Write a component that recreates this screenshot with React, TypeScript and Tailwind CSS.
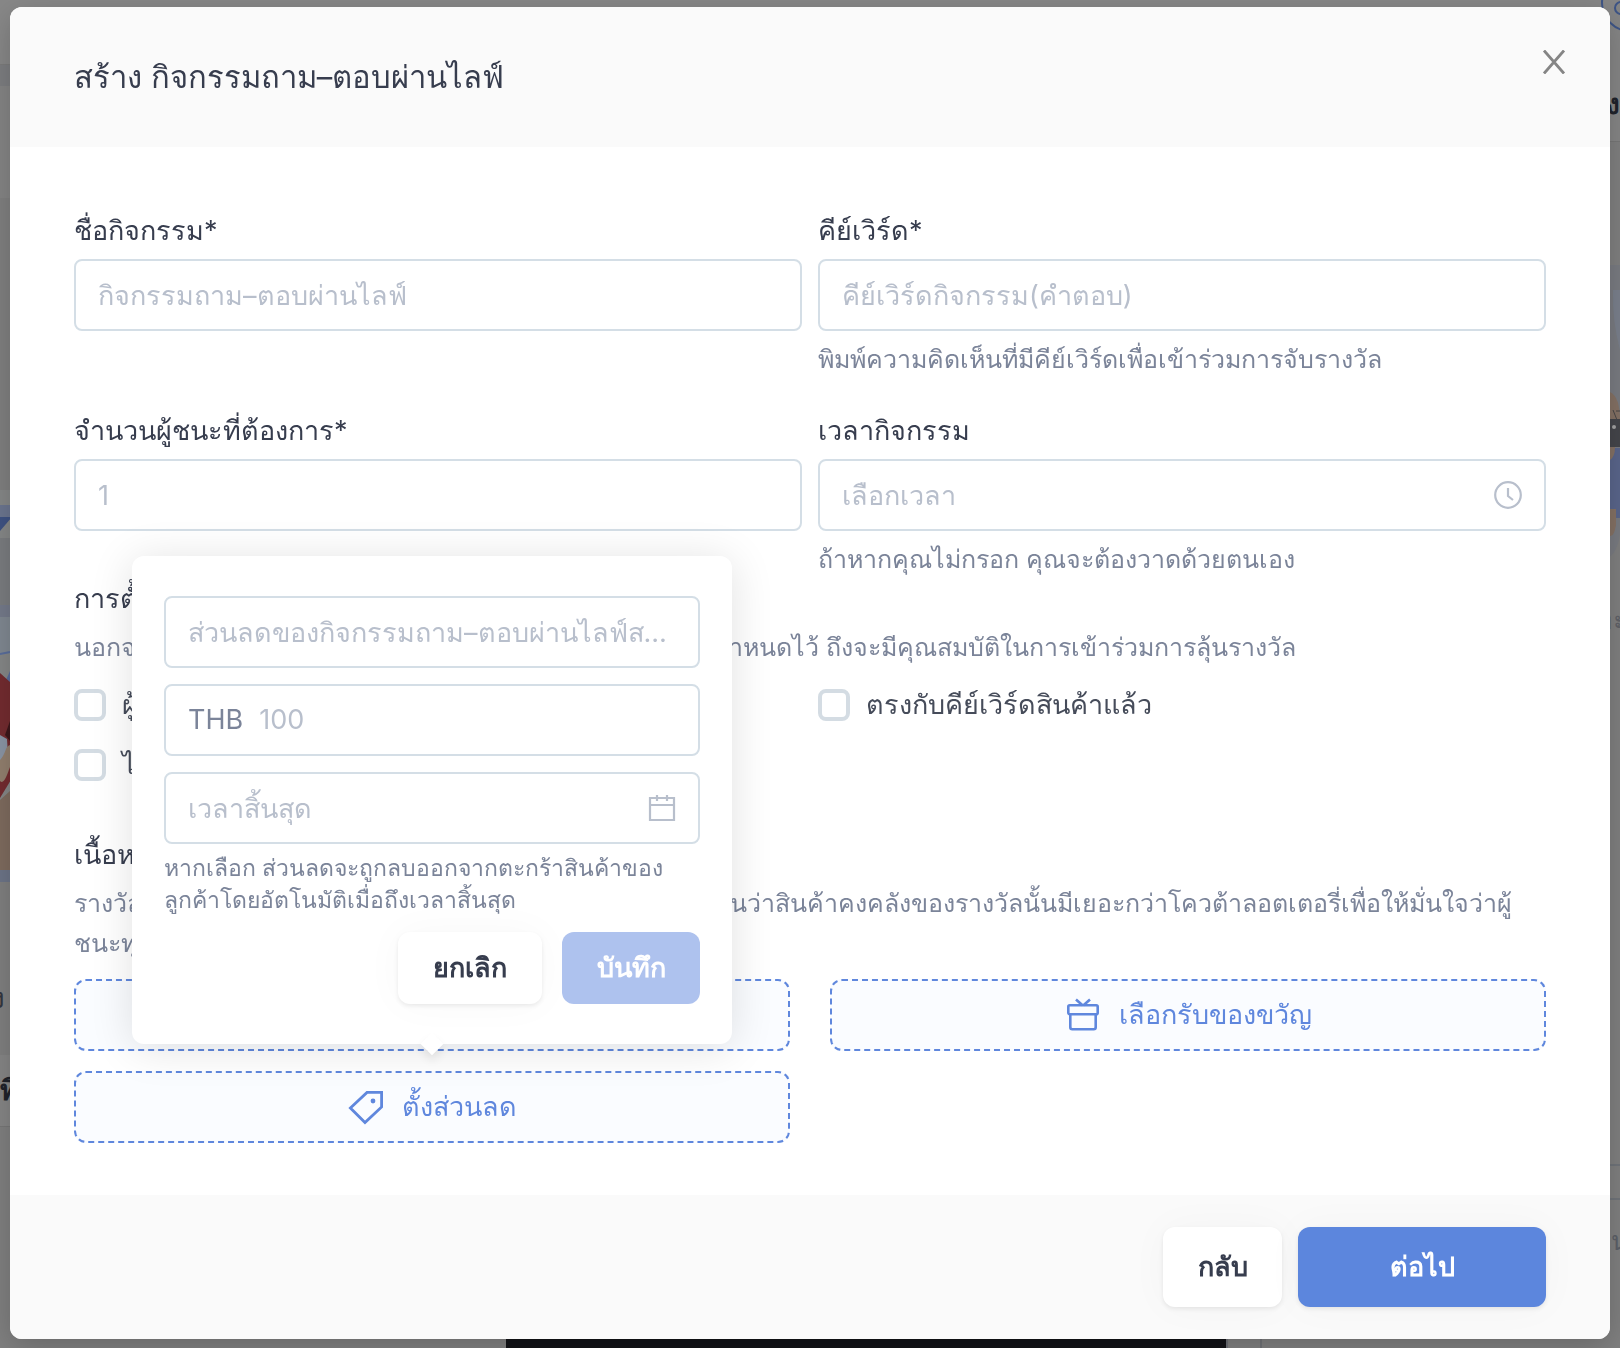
import React, { useState } from 'react';

const inputClass =
    'block w-full h-[72px] rounded-lg border-2 border-[#d4dee6] bg-transparent px-[22px] text-[27px] text-[#373d4e] text-ellipsis outline-none placeholder:text-[#b8bfcc] placeholder:opacity-100';

const ClockIcon = () => (
    <svg className="size-7" viewBox="0 0 28 28" fill="none" stroke="#b8bfcc" strokeWidth="2.2">
        <circle cx="14" cy="14" r="12.8" />
        <path d="M14 7v8l5 4" />
    </svg>
);

const CalendarIcon = () => (
    <svg className="size-7" viewBox="0 0 28 28" fill="none" stroke="#b8bfcc" strokeWidth="2.2">
        <path d="M2 4h24v22H2zM2 11h24M9 1v6M19 1v6" />
    </svg>
);

const GiftIcon = () => (
    <svg className="size-9" viewBox="0 0 36 36" fill="none" stroke="#5f87dd" strokeWidth="2.6">
        <rect x="3.3" y="8.3" width="29.4" height="9" rx="1.5" />
        <path d="M5.3 17.3v13a2 2 0 0 0 2 2h21.4a2 2 0 0 0 2-2v-13" />
        <path d="M11 2.5l6.5 5.8M25 2.5l-6.5 5.8" />
    </svg>
);

const TagIcon = () => (
    <svg className="size-9" viewBox="0 0 36 36" fill="none" stroke="#5f87dd" strokeWidth="2.8">
        <path d="M19 3.4h14.6v14.6L17 33.6 2.4 19z" />
        <circle cx="25" cy="12" r="2.4" fill="#5f87dd" stroke="none" />
    </svg>
);

// Dimmed page that stays visible around the dialog
const Backdrop = () => (
    <div className="fixed inset-0 overflow-hidden bg-[#808080]" aria-hidden="true">
        <div className="absolute inset-x-0 top-0 h-16 bg-[#888888]" />
        <div className="absolute top-16 left-0 h-[22px] w-10 border-t border-[#7c7c7c] bg-[#7d7e81]" />
        <div className="absolute top-[86px] left-0 h-28 w-10 bg-[#858585]" />
        <svg className="absolute top-[490px] left-0 h-[400px] w-5" viewBox="0 0 20 400">
            <path fill="#868888" d="M0 0h20v400H0z" />
            <path fill="#6c7690" d="M0 15h20v12H0z" />
            <path fill="#3f5384" d="M0 27h12L0 41z" />
            <path fill="#7b7d80" d="M0 48h20v67H0z" />
            <path fill="#757b8b" d="M0 115h20v12H0z" />
            <path fill="#818992" d="M0 127h20v37H0z" />
            <path stroke="#5a6e9c" strokeWidth="2" d="M0 164l10-2" />
            <path fill="#5a6d9b" d="M6 190l4-9v18z" />
            <path fill="#742c30" d="M0 183l20 18v74l-20 33z" />
            <path fill="#3d181b" d="M5 245l5-14v20z" />
            <path fill="#8b96a6" d="M0 245l7 4 2 30H0z" />
            <path fill="#93806f" d="M0 270c6-6 5-14 10-15v22c-3 8-6 18-10 14z" />
            <path fill="#7f6c5f" d="M0 310l20-18v88H0z" />
            <path fill="#6d7588" d="M0 380h20v12H0z" />
            <path fill="#808080" d="M0 392h20v8H0z" />
        </svg>
        <span className="absolute top-[982px] left-[-9px] text-[28px] leading-8 text-[#34373f]">ง</span>
        <div className="absolute top-[1055px] left-0 h-[72px] w-10 border-b border-[#777777] bg-[#868686]" />
        <span className="absolute top-[1074px] left-0 text-[28px] leading-8 font-bold text-[#20232b]">ที่</span>

        <div className="absolute top-0 right-0 h-[142px] w-10 border-b border-[#777777] bg-[#868686]" />
        <svg className="absolute top-0 right-0 h-10 w-5" viewBox="0 0 20 40" fill="none" stroke="#3e5587" strokeWidth="2">
            <circle cx="30" cy="3" r="28" />
            <circle cx="21" cy="8" r="6" />
        </svg>
        <span className="absolute top-[88px] right-0 text-[28px] leading-8 font-bold text-[#20232b]">ง</span>
        <svg className="absolute top-[260px] right-0 h-[300px] w-5" viewBox="0 0 20 300">
            <path fill="#7a7c82" d="M0 5h20v270q-4 25-20 25z" />
            <path fill="#7b818d" d="M13 30h7v60q-8-30-7-60z" />
            <path fill="#857265" d="M10 132q10 5 10 28H10z" />
            <path stroke="#4a4747" fill="none" d="M13 150l4 10M16 151h4" />
            <path fill="#45464b" d="M10 159h10v28H10z" />
            <circle cx="14" cy="167" r="2" fill="#a5a5a5" />
            <path fill="#5a668c" d="M10 188h10v70H10z" />
            <path fill="#857265" d="M10 187h5q0 10-5 13zM10 249h6v16q-2 12-6 11z" />
        </svg>
        <span className="absolute top-[603px] right-[-8px] text-[28px] leading-8 text-[#606268]">อะ</span>
        <div className="absolute top-[1164px] right-0 h-9 w-10 border-y-2 border-[#70747a]" />
        <span className="absolute top-[1225px] right-[-9px] text-[26px] leading-8 text-[#5c6068]">น</span>
        <div className="absolute bottom-0 left-[506px] h-4 w-[722px] border-r-2 border-[#6c6f75] bg-[#121317]" />
        <div className="absolute bottom-0 left-[1260px] h-4 w-0.5 bg-[#707276]" />
    </div>
);

type CheckProps = {
    id: string;
    label: string;
};

const Check = ({ id, label }: CheckProps) => (
    <div className="flex h-11 items-center gap-4">
        <input
            id={id}
            type="checkbox"
            className="size-8 shrink-0 appearance-none rounded-lg border-4 border-[#d4dce3] bg-white checked:bg-[#5c86dd]"
        />
        <label htmlFor={id} className="text-[27px] text-[#464c5a]">
            {label}
        </label>
    </div>
);

const DiscountPopover = ({ onClose }: { onClose: () => void }) => (
    <div className="absolute bottom-full left-1/2 z-10 mb-[27px] w-[600px] -translate-x-1/2 rounded-xl bg-white px-8 py-10 shadow-[0_4px_44px_rgba(0,0,0,0.12)]">
        <div className="absolute -bottom-2 left-1/2 size-4 -translate-x-1/2 rotate-45 bg-white shadow-[4px_4px_10px_rgba(0,0,0,0.08)]" />
        <div className="relative space-y-4">
            <input
                type="text"
                aria-label="ชื่อส่วนลด"
                placeholder="ส่วนลดของกิจกรรมถาม–ตอบผ่านไลฟ์สดประจำวัน"
                className={inputClass}
            />
            <div className="flex h-[72px] items-center gap-4 rounded-lg border-2 border-[#d4dee6] px-[22px] text-[27px]">
                <label htmlFor="amount" className="text-[#7b8499]">THB</label>
                <input
                    id="amount"
                    type="text"
                    placeholder="100"
                    className="w-full min-w-0 outline-none placeholder:text-[#b8bfcc] placeholder:opacity-100"
                />
            </div>
            <div className="relative">
                <input type="text" aria-label="เวลาสิ้นสุด" placeholder="เวลาสิ้นสุด" className={inputClass} />
                <span className="absolute top-[22px] right-6">
                    <CalendarIcon />
                </span>
            </div>
        </div>
        <p className="mt-2 text-[23px] leading-8 text-[#7b8499]">
            หากเลือก ส่วนลดจะถูกลบออกจากตะกร้าสินค้าของ
            <br />
            ลูกค้าโดยอัตโนมัติเมื่อถึงเวลาสิ้นสุด
        </p>
        <div className="mt-4 flex justify-end gap-5">
            <button
                onClick={onClose}
                className="h-[72px] w-36 rounded-xl bg-white text-[27px] font-bold text-[#373d4e] shadow-[0_2px_4px_rgba(0,0,0,0.08),0_0_40px_rgba(0,0,0,0.03)]"
            >
                ยกเลิก
            </button>
            <button disabled className="h-[72px] w-[138px] rounded-xl bg-[#aec2ee] text-[27px] font-bold text-white">
                บันทึก
            </button>
        </div>
    </div>
);

const labelClass = 'block text-[27px] leading-10 text-[#373d4e]';
const hintClass = 'mt-2 text-[25px] leading-10 text-[#7b8499]';
const prizeClass =
    'flex h-[72px] w-full items-center justify-center gap-[18px] rounded-xl border-2 border-dashed border-[#5f87dd] bg-[#fafcff] text-[27px] text-[#5f87dd]';

export default function App() {
    const [discountOpen, setDiscountOpen] = useState(true);

    return (
        <div className="font-['Inter',sans-serif]">
            <Backdrop />
            <div className="relative px-2.5 pt-[7px] pb-[9px]">
                <div
                    role="dialog"
                    aria-labelledby="dialog-title"
                    className="rounded-xl bg-white shadow-[0_8px_32px_rgba(0,0,0,0.2)]"
                >
                    <header className="flex items-start justify-between rounded-t-xl bg-[#fafafa] py-10 pr-[41px] pl-16">
                        <h1 id="dialog-title" className="text-[31px] leading-[60px] text-[#373d4e]">
                            สร้าง กิจกรรมถาม–ตอบผ่านไลฟ์
                        </h1>
                        <button aria-label="ปิด" className="flex size-[30px] items-center justify-center">
                            <svg className="size-6" viewBox="0 0 24 24" fill="none" stroke="#858585" strokeWidth="2.8">
                                <path d="M2 0.5l20 23M22 0.5l-20 23" />
                            </svg>
                        </button>
                    </header>

                    <div className="px-16 pt-16 pb-[52px]">
                        {/* Activity fields */}
                        <div className="grid grid-cols-2 gap-x-4 gap-y-8">
                            <div>
                                <label htmlFor="name" className={labelClass}>ชื่อกิจกรรม*</label>
                                <input id="name" type="text" placeholder="กิจกรรมถาม–ตอบผ่านไลฟ์" className={`mt-2 ${inputClass}`} />
                            </div>
                            <div>
                                <label htmlFor="keyword" className={labelClass}>คีย์เวิร์ด*</label>
                                <input id="keyword" type="text" placeholder="คีย์เวิร์ดกิจกรรม(คำตอบ)" className={`mt-2 ${inputClass}`} />
                                <p className={hintClass}>พิมพ์ความคิดเห็นที่มีคีย์เวิร์ดเพื่อเข้าร่วมการจับรางวัล</p>
                            </div>
                            <div>
                                <label htmlFor="winners" className={labelClass}>จำนวนผู้ชนะที่ต้องการ*</label>
                                <input id="winners" type="text" placeholder="1" className={`mt-2 ${inputClass}`} />
                            </div>
                            <div>
                                <label htmlFor="time" className={labelClass}>เวลากิจกรรม</label>
                                <div className="relative mt-2">
                                    <input id="time" type="text" placeholder="เลือกเวลา" className={inputClass} />
                                    <span className="absolute top-[22px] right-6">
                                        <ClockIcon />
                                    </span>
                                </div>
                                <p className={hintClass}>ถ้าหากคุณไม่กรอก คุณจะต้องวาดด้วยตนเอง</p>
                            </div>
                        </div>

                        {/* Conditions */}
                        <h2 className={labelClass}>การตั้งค่า</h2>
                        <p className={hintClass}>
                            นอกจากคีย์เวิร์ดแล้ว ผู้เข้าร่วมจะต้องทำตามเงื่อนไขที่คุณได้กำหนดไว้ ถึงจะมีคุณสมบัติในการเข้าร่วมการลุ้นรางวัล
                        </p>
                        <div className="mt-4 grid grid-cols-2 gap-4">
                            <Check id="bought" label="ผู้ที่เคยซื้อสินค้าแล้ว" />
                            <Check id="matched" label="ตรงกับคีย์เวิร์ดสินค้าแล้ว" />
                            <Check id="shared" label="ไลฟ์ที่แชร์แล้ว" />
                        </div>

                        {/* Prizes */}
                        <h2 className={`mt-12 ${labelClass}`}>เนื้อหารางวัล</h2>
                        <p className={hintClass}>
                            รางวัลจะถูกเพิ่มลงในตะกร้าของผู้ชนะโดยอัตโนมัติ กรุณายืนยันว่าสินค้าคงคลังของรางวัลนั้นมีเยอะกว่าโควต้าลอตเตอรี่เพื่อให้มั่นใจว่าผู้
                            <br />
                            ชนะทุกคนจะได้รับรางวัล
                        </p>
                        <div className="mt-4 grid grid-cols-2 gap-x-10 gap-y-5">
                            <button className={prizeClass}>เลือกสินค้า</button>
                            <button className={prizeClass}>
                                <GiftIcon />
                                เลือกรับของขวัญ
                            </button>
                            <div className="relative">
                                <button className={prizeClass} onClick={() => setDiscountOpen(!discountOpen)}>
                                    <TagIcon />
                                    ตั้งส่วนลด
                                </button>
                                {discountOpen && <DiscountPopover onClose={() => setDiscountOpen(false)} />}
                            </div>
                        </div>
                    </div>

                    <footer className="flex justify-end gap-4 rounded-b-xl bg-[#fafafa] px-16 py-8">
                        <button className="h-20 w-[119px] rounded-xl bg-white text-[27px] font-bold text-[#373d4e] shadow-[0_2px_4px_rgba(0,0,0,0.08),0_0_40px_rgba(0,0,0,0.03)]">
                            กลับ
                        </button>
                        <button className="h-20 w-[248px] rounded-xl bg-[#5c86dd] text-[27px] font-bold text-white shadow-[0_2px_4px_rgba(0,0,0,0.08),0_0_40px_rgba(0,0,0,0.03)]">
                            ต่อไป
                        </button>
                    </footer>
                </div>
            </div>
        </div>
    );
}
